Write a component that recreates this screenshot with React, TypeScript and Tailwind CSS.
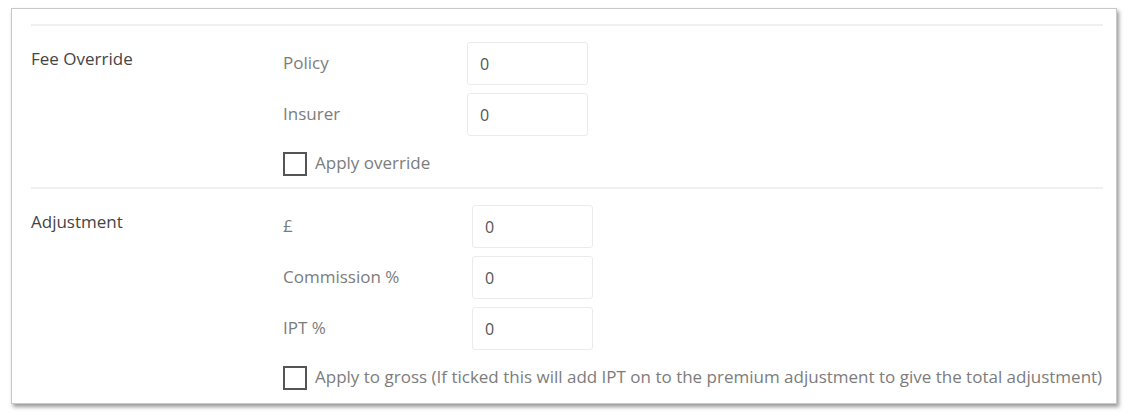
import React from "react";

const font = { fontFamily: '"Open Sans", "Liberation Sans", sans-serif' };

function Field({ label, labelW }: { label: string; labelW: string }) {
  return (
    <div className="flex items-center">
      <div className={`${labelW} -mt-[3px] text-[17px] leading-[23px] text-[#7c7c7c]`}>{label}</div>
      <div className="flex h-[43px] w-[121px] items-center rounded-[3px] border border-[#ebebeb] bg-white pl-[12px] text-[16px] text-[#555]">
        0
      </div>
    </div>
  );
}

function Check({ label }: { label: string }) {
  return (
    <div className="flex items-center gap-[8px]">
      <div className="h-[24px] w-[24px] shrink-0 border-2 border-[#555] bg-white" />
      <div className="-mt-[4px] whitespace-nowrap text-[17px] leading-[23px] text-[#7c7c7c]">{label}</div>
    </div>
  );
}

export default function App() {
  return (
    <div className="h-[420px] w-[1128px] bg-white pl-[11px] pt-[8px]" style={font}>
      <div className="h-[396px] w-[1106px] border border-[#c8c8c8] bg-white pl-[19px] pr-[13px] pt-[15px] shadow-[2px_3px_4px_rgba(0,0,0,0.4)]">
        <div className="border-t-2 border-[#f0f0f0]" />
        <div className="flex pb-[11px] pt-[16px]">
          <div className="w-[252px] pt-[5px] text-[17px] leading-[23px] text-[#444]">Fee Override</div>
          <div className="flex flex-col">
            <div className="flex flex-col gap-[8px]">
              <Field label="Policy" labelW="w-[184px]" />
              <Field label="Insurer" labelW="w-[184px]" />
            </div>
            <div className="mt-[16px]">
              <Check label="Apply override" />
            </div>
          </div>
        </div>
        <div className="border-t-2 border-[#f0f0f0]" />
        <div className="flex pt-[16px]">
          <div className="w-[252px] pt-[5px] text-[17px] leading-[23px] text-[#444]">Adjustment</div>
          <div className="flex flex-col">
            <div className="flex flex-col gap-[8px]">
              <Field label="£" labelW="w-[189px]" />
              <Field label="Commission %" labelW="w-[189px]" />
              <Field label="IPT %" labelW="w-[189px]" />
            </div>
            <div className="mt-[16px]">
              <Check label="Apply to gross (If ticked this will add IPT on to the premium adjustment to give the total adjustment)" />
            </div>
          </div>
        </div>
      </div>
    </div>
  );
}
